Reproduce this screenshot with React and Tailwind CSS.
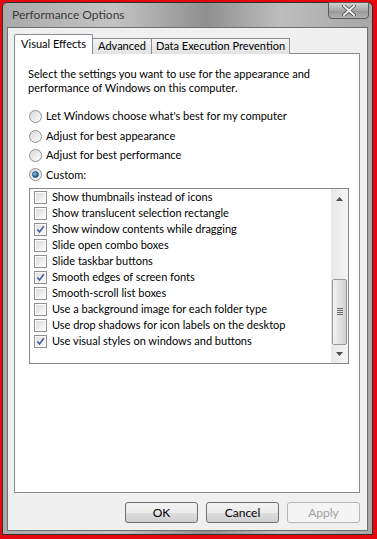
import React from "react";

const font = { fontFamily: 'Lato, "Noto Sans", sans-serif' };

const options = [
	{ label: "Let Windows choose what's best for my computer", checked: false },
	{ label: "Adjust for best appearance", checked: false },
	{ label: "Adjust for best performance", checked: false },
	{ label: "Custom:", checked: true },
];

const items = [
	{ label: "Show thumbnails instead of icons", checked: false },
	{ label: "Show translucent selection rectangle", checked: false },
	{ label: "Show window contents while dragging", checked: true },
	{ label: "Slide open combo boxes", checked: false },
	{ label: "Slide taskbar buttons", checked: false },
	{ label: "Smooth edges of screen fonts", checked: true },
	{ label: "Smooth-scroll list boxes", checked: false },
	{ label: "Use a background image for each folder type", checked: false },
	{ label: "Use drop shadows for icon labels on the desktop", checked: false },
	{ label: "Use visual styles on windows and buttons", checked: true },
];

const Radio = ({ checked }) => (
	<div className="w-[13px] h-[13px] rounded-full border border-[#8f8f8f] bg-gradient-to-br from-[#dcdcdc] to-[#fbfbfb] flex items-center justify-center shrink-0">
		{checked && (
			<div className="w-[7px] h-[7px] rounded-full bg-[radial-gradient(circle_at_35%_35%,#8fd0f5,#1f5c8e_70%)] border border-[#1b4f7a]" />
		)}
	</div>
);

const Check = ({ checked }) => (
	<div className="w-[13px] h-[13px] border border-[#8f8f8f] bg-white p-[1px] shrink-0">
		<div className="w-full h-full bg-gradient-to-br from-[#dedede] to-[#fbfbfb] flex items-center justify-center">
			{checked && (
				<svg width="9" height="9" viewBox="0 0 9 9">
					<path d="M1.5 4.5 L3.5 7 L7.8 1.2" fill="none" stroke="#4a5a9a" strokeWidth="1.6" />
				</svg>
			)}
		</div>
	</div>
);

const Button = ({ children, disabled }) => (
	<div
		className={
			disabled
				? "w-[73px] h-[21px] rounded-[3px] border border-[#b5b8bb] bg-[#f4f4f4] text-[#a0a0a0] flex items-center justify-center"
				: "w-[73px] h-[21px] rounded-[3px] border border-[#707070] bg-[linear-gradient(#f2f2f2_0%,#ebebeb_50%,#dddddd_51%,#cfcfcf_100%)] flex items-center justify-center"
		}
	>
		<div className="text-[12px] leading-none">{children}</div>
	</div>
);

const App = () => {
	return (
		<div className="w-[377px] h-[539px] bg-[#e5080c] pt-[2px] pl-[2px] pr-[4px] pb-[4px]" style={font}>
			<div className="relative w-full h-full border border-[#303030] rounded-t-[5px] bg-[linear-gradient(90deg,#a9a9a9,#c4c4c4_30%,#8f8f8f_55%,#bdbdbd_75%,#a7a7a7)] flex flex-col px-[4px] pb-[3px]">
				{/* title bar */}
				<div className="h-[24px] flex items-center pl-[5px] pb-px shrink-0">
					<span className="text-[12px] text-[#3a3a3a]">Performance Options</span>
				</div>
				<div className="absolute top-[-1px] right-[3px] w-[41px] h-[17px] rounded-b-[4px] border border-[#5a5a5a] bg-[linear-gradient(#d0d0d0,#a8a8a8_50%,#959595_51%,#b3b3b3)] flex items-center justify-center">
					<svg width="14" height="11" viewBox="0 0 14 11">
						<path d="M2 1 L12 10 M12 1 L2 10" stroke="#4a4a4a" strokeWidth="3.6" strokeLinecap="square" />
						<path d="M2 1 L12 10 M12 1 L2 10" stroke="#f4f4f4" strokeWidth="2" strokeLinecap="square" />
					</svg>
				</div>

				{/* client area */}
				<div className="flex-1 bg-[#f0f0f0] border border-[#6f6f6f] flex flex-col pt-[6px] pl-[6px] pr-[7px] pb-[6px] text-[11px] text-black whitespace-nowrap">
					{/* tabs */}
					<div className="flex items-end h-[20px] relative z-10">
						<div className="w-[79px] h-[20px] bg-white border border-[#898c95] border-b-0 rounded-t-[2px] flex items-center justify-center pb-px">
							Visual Effects
						</div>
						<div className="w-[59px] h-[16px] bg-[linear-gradient(#f3f3f3,#e3e3e3)] border border-[#898c95] border-b-0 border-l-0 flex items-center justify-center">
							Advanced
						</div>
						<div className="w-[138px] h-[16px] bg-[linear-gradient(#f3f3f3,#e3e3e3)] border border-[#898c95] border-b-0 border-l-0 flex items-center justify-center">
							Data Execution Prevention
						</div>
					</div>
					<div className="h-[440px] -mt-px bg-white border border-[#898c95] pl-[13px] pr-[11px] pt-[13px]">
						<div className="leading-[14px]">
							Select the settings you want to use for the appearance and
							<br />
							performance of Windows on this computer.
						</div>
						<div className="flex flex-col mt-[12px]">
							{options.map((o) => (
								<div key={o.label} className="h-[19.4px] flex items-center gap-[4px] pl-[1px]">
									<Radio checked={o.checked} />
									<span>{o.label}</span>
								</div>
							))}
						</div>
						<div className="ml-px mt-[3px] w-[320px] h-[176px] border border-[#828790] flex">
							<div className="flex-1 flex flex-col pt-px pl-[4px]">
								{items.map((it) => (
									<div key={it.label} className="h-[16px] flex items-center gap-[5px]">
										<Check checked={it.checked} />
										<span>{it.label}</span>
									</div>
								))}
							</div>
							<div className="w-[17px] bg-[linear-gradient(90deg,#e8e8e8,#f4f4f4)] flex flex-col">
								<div className="h-[17px] flex items-center justify-center mt-[2px]">
									<svg width="7" height="4" viewBox="0 0 7 4">
										<path d="M0 4 L3.5 0 L7 4 Z" fill="#4d4d4d" />
									</svg>
								</div>
								<div className="h-[71px]" />
								<div className="h-[66px] mx-px rounded-[2px] border border-[#979797] bg-[linear-gradient(90deg,#f4f4f4,#e2e2e2_50%,#d2d2d2)] flex items-center justify-center">
									<div className="flex flex-col gap-px">
										<div className="w-[6px] h-px bg-[#6a6a6a]" />
										<div className="w-[6px] h-px bg-[#6a6a6a]" />
										<div className="w-[6px] h-px bg-[#6a6a6a]" />
										<div className="w-[6px] h-px bg-[#6a6a6a]" />
									</div>
								</div>
								<div className="flex-1 flex items-center justify-center">
									<svg width="7" height="4" viewBox="0 0 7 4">
										<path d="M0 0 L7 0 L3.5 4 Z" fill="#4d4d4d" />
									</svg>
								</div>
							</div>
						</div>
					</div>
					{/* buttons */}
					<div className="flex justify-end gap-[8px] mt-[9px]">
						<Button>OK</Button>
						<Button>Cancel</Button>
						<Button disabled>Apply</Button>
					</div>
				</div>
			</div>
		</div>
	);
};

export default App;
